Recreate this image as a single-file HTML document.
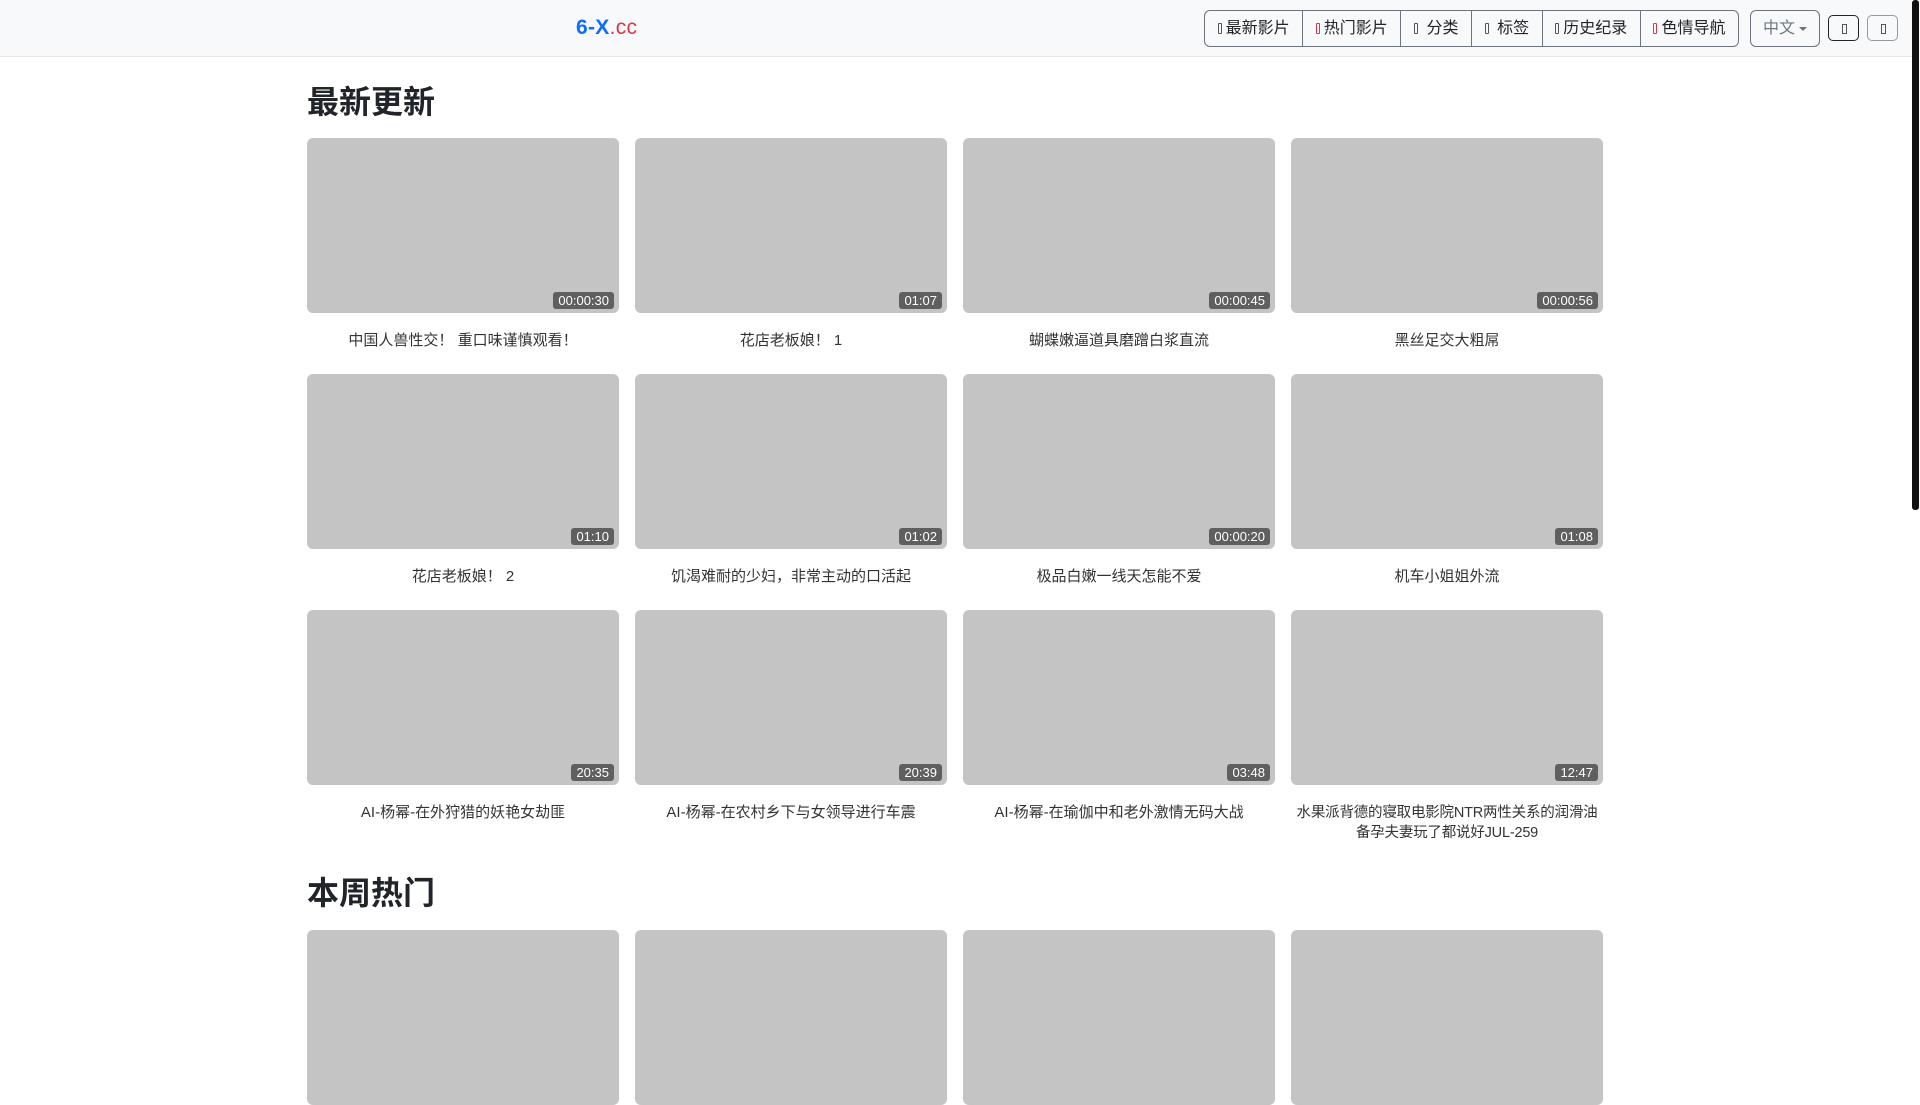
<!DOCTYPE html>
<html><head><meta charset="utf-8"><style>
*{box-sizing:border-box;margin:0;padding:0}
html,body{width:1920px;height:1080px;overflow:hidden;background:#fff;font-family:"Liberation Sans","Noto Sans CJK SC",sans-serif;color:#212529}
.hdr{position:absolute;left:0;top:0;width:1912px;height:57px;background:#f8f9fa;border-bottom:1px solid #e5e5e5}
.logo{position:absolute;left:576px;top:16px;font-size:21px;font-weight:bold;color:#0d6efd;letter-spacing:0.3px}
.logo span{color:#dc3545;font-weight:normal}
.grp{position:absolute;left:1204px;top:10px;height:37px;display:flex;border:1px solid #6c757d;border-radius:6px;overflow:hidden;background:#f8f9fa}
.grp div{padding:0 12.6px;line-height:35px;font-size:16px;color:#212529;border-left:1px solid #6c757d;white-space:nowrap}
.grp div:first-child{border-left:none}
.ic{display:inline-block;width:4px;height:11px;border:1px solid #555;border-radius:1px;margin-right:4px;vertical-align:-1px}
.ic.r{border-color:#dc3545}
.lang{position:absolute;left:1750px;top:10px;width:70px;height:37px;border:1px solid #6c757d;border-radius:6px;color:#6c757d;font-size:16px;line-height:35px;padding-left:12px}
.lang:after{content:"";position:absolute;right:12px;top:16px;border:4px solid transparent;border-top:4px solid #6c757d}
.sb{position:absolute;top:15px;width:31px;height:26px;border:1px solid #212529;border-radius:5px}
.sb:after{content:"";position:absolute;left:13px;top:8px;width:3px;height:8px;border:1px solid #555}
.sb2{border-color:#999}
.thumb{position:absolute;left:1912px;top:0;width:7px;height:510px;background:#111;border-radius:3px}
.main{position:absolute;left:307px;top:0;width:1296px}
h2{font-size:32px;font-weight:bold;line-height:38px;height:38px}
.grid{display:grid;grid-template-columns:repeat(4,312px);column-gap:16px;row-gap:23px}
.card{height:175px;background:#c4c4c4;border-radius:6px;position:relative}
.d{position:absolute;right:5px;bottom:4px;background:#5f5f5f;color:#fff;font-size:13px;line-height:17px;padding:0 5px;border-radius:3px}
.t{margin-top:18px;text-align:center;font-size:15px;line-height:20px;color:#333;padding:0 2px}
.nw{white-space:nowrap;font-size:14.5px;letter-spacing:-0.2px;padding:0;margin-left:-6px;margin-right:-6px}
</style></head><body>
<div class="hdr">
<div class="logo">6-X<span>.cc</span></div>
<div class="grp"><div><i class="ic"></i>最新影片</div><div><i class="ic r"></i>热门影片</div><div><i class="ic"></i> 分类</div><div><i class="ic"></i> 标签</div><div><i class="ic"></i>历史纪录</div><div><i class="ic r"></i>色情导航</div></div>
<div class="lang">中文</div>
<div class="sb" style="left:1828px"></div>
<div class="sb sb2" style="left:1867px"></div>
</div>
<div class="thumb"></div>
<div class="main">
<h2 style="margin-top:83px;margin-bottom:17px">最新更新</h2>
<div class="grid">
<div><div class="card"><span class="d">00:00:30</span></div><div class="t">中国人兽性交！ 重口味谨慎观看！</div></div>
<div><div class="card"><span class="d">01:07</span></div><div class="t">花店老板娘！ 1</div></div>
<div><div class="card"><span class="d">00:00:45</span></div><div class="t">蝴蝶嫩逼道具磨蹭白浆直流</div></div>
<div><div class="card"><span class="d">00:00:56</span></div><div class="t">黑丝足交大粗屌</div></div>
<div><div class="card"><span class="d">01:10</span></div><div class="t">花店老板娘！ 2</div></div>
<div><div class="card"><span class="d">01:02</span></div><div class="t">饥渴难耐的少妇，非常主动的口活起</div></div>
<div><div class="card"><span class="d">00:00:20</span></div><div class="t">极品白嫩一线天怎能不爱</div></div>
<div><div class="card"><span class="d">01:08</span></div><div class="t">机车小姐姐外流</div></div>
<div><div class="card"><span class="d">20:35</span></div><div class="t">AI-杨幂-在外狩猎的妖艳女劫匪</div></div>
<div><div class="card"><span class="d">20:39</span></div><div class="t">AI-杨幂-在农村乡下与女领导进行车震</div></div>
<div><div class="card"><span class="d">03:48</span></div><div class="t">AI-杨幂-在瑜伽中和老外激情无码大战</div></div>
<div><div class="card"><span class="d">12:47</span></div><div class="t nw">水果派背德的寝取电影院NTR两性关系的润滑油<br>备孕夫妻玩了都说好JUL-259</div></div>
</div>
<h2 style="margin-top:31px;margin-bottom:18px">本周热门</h2>
<div class="grid">
<div><div class="card"></div></div><div><div class="card"></div></div><div><div class="card"></div></div><div><div class="card"></div></div>
</div>
</div>
</body></html>
